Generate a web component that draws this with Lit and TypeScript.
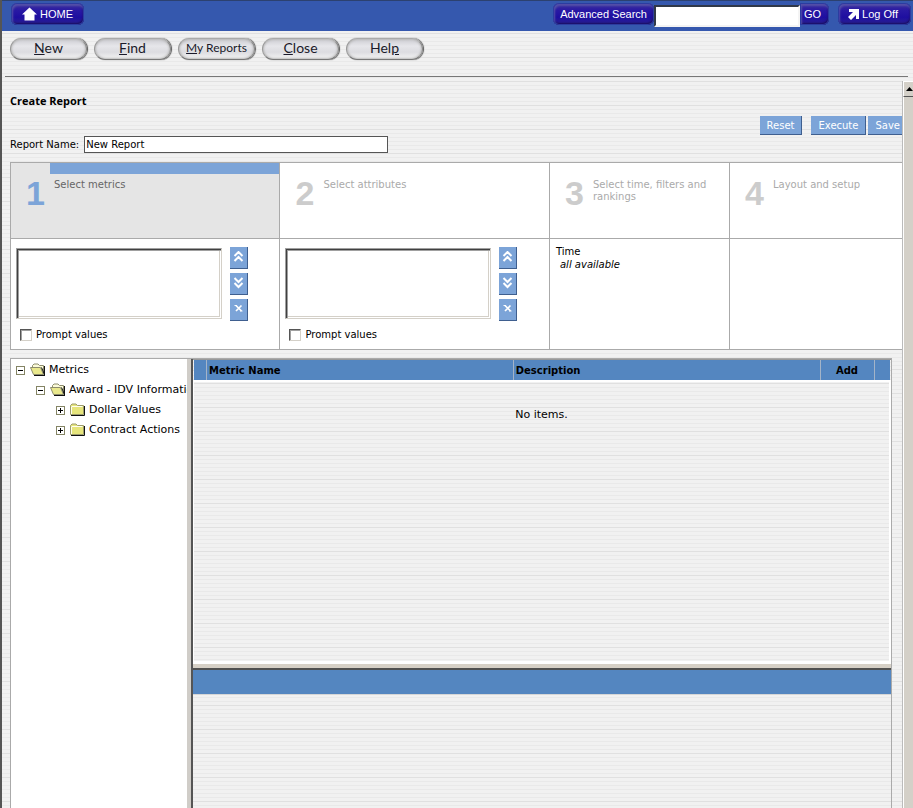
import { LitElement, html, css, svg } from "lit";
import { customElement, property } from "lit/decorators.js";

const chevronsUp = svg`<path d="M1.500 5 5.500 1 9.500 5M1.500 10 5.500 6 9.500 10" fill="none" stroke="#fff" stroke-width="2"/>`;
const chevronsDown = svg`<path d="M1.500 1 5.500 5 9.500 1M1.500 6 5.500 10 9.500 6" fill="none" stroke="#fff" stroke-width="2"/>`;
const cross = svg`<path d="M3 2.500 8.500 8M8.500 2.500 3 8" fill="none" stroke="#fff" stroke-width="1.700"/><path d="M1.500 2.500H4M7 8h2.500" stroke="#fff"/>`;

@customElement("step-picker")
class StepPicker extends LitElement {
  @property() name = "";

  static styles = css`
    :host { display: block; padding: 8px 6px 0 5px; }
    .row { display: flex; gap: 8px; }
    .list {
      flex: 0 1 206px; min-width: 0; height: 71px; box-sizing: border-box; margin: 1px 0 0; padding: 0;
      border: 1px solid; border-color: #a0a0a0 #d4d0c8 #d4d0c8 #a0a0a0; border-radius: 0;
      box-shadow: inset 1px 1px #404040, inset 2px 2px #a0a0a0, inset -1px -1px #fff, inset -2px -2px #d4d0c8;
      background: #fff; outline: none;
    }
    .tools { display: flex; flex-direction: column; gap: 4px; }
    .tool {
      width: 18px; height: 22px; padding: 0 0 2px; display: grid; place-items: center;
      background: #7ca4d8; border: 0; border-right: 1px solid #3f5f8f; border-bottom: 1px solid #3f5f8f;
    }
    .prompt { display: flex; align-items: center; gap: 4px; margin: 7px 0 0 4px; font: 10px/14px "DejaVu Sans", Verdana, sans-serif; }
    .box {
      appearance: none; width: 12px; height: 12px; margin: 0; background: #fff;
      border: 1px solid; border-color: #555 #d4d0c8 #d4d0c8 #555; box-shadow: inset 1px 1px #a0a0a0;
    }
  `;

  render() {
    return html`
      <div class="row">
        <select class="list" multiple aria-label="Selected ${this.name}"></select>
        <div class="tools">
          <button class="tool" aria-label="Move up"><svg width="11" height="12">${chevronsUp}</svg></button>
          <button class="tool" aria-label="Move down"><svg width="11" height="12">${chevronsDown}</svg></button>
          <button class="tool" aria-label="Remove"><svg width="11" height="11">${cross}</svg></button>
        </div>
      </div>
      <label class="prompt"><input class="box" type="checkbox" />Prompt values</label>
    `;
  }
}

const folderOpen = svg`
  <path d="M2.500 8V2.500L4 1h4l1.500 1.500h4v9" fill="#fbfad8" stroke="#8c8c6c"/>
  <path d="M3.500 11.500.5 4.500h10l3 7z" fill="#e9e88c" stroke="#8c8c6c"/>
  <path d="M4 12.500h11M14.500 3v9.500M11.500 4.500l3 7" fill="none" stroke="#111"/>`;
const folderClosed = svg`
  <path d="M.5 11.500v-9L2 1h4l1.500 1.500h6v9z" fill="#e6e57c" stroke="#9c9c6c"/>
  <path d="M1.500 3.500h11M1.500 4v7" fill="none" stroke="#fffff0"/>
  <path d="M1 12.500h13.500V3" fill="none" stroke="#111"/>`;

interface TreeNode { label: string; depth: number; open: boolean; }

const nodes: TreeNode[] = [
  { label: "Metrics", depth: 0, open: true },
  { label: "Award - IDV Information", depth: 1, open: true },
  { label: "Dollar Values", depth: 2, open: false },
  { label: "Contract Actions", depth: 2, open: false },
];

@customElement("metric-tree")
class MetricTree extends LitElement {
  static styles = css`
    :host { display: block; overflow: hidden; background: #fff; font: 11px/20px "DejaVu Sans", Verdana, sans-serif; }
    .tree { list-style: none; margin: 0; padding: 1px 0 0 5px; }
    .node { display: flex; align-items: center; height: 20px; white-space: nowrap; }
    .d1 { padding-left: 20px; }
    .d2 { padding-left: 40px; }
    .toggle { width: 9px; height: 9px; flex: none; padding: 0; margin-right: 5px; border: 0; background: none; display: block; }
    .toggle svg { display: block; }
    .icon { flex: none; margin-right: 3px; }
    .link { color: #000; text-decoration: none; }
  `;

  render() {
    return html`<ul class="tree">
      ${nodes.map((n) => html`
        <li class="node d${n.depth}">
          <button class="toggle" aria-label="${n.open ? "Collapse" : "Expand"} ${n.label}">
            <svg width="9" height="9" shape-rendering="crispEdges">
              <path d="M.5 .5h8v8h-8z" fill="#fff" stroke="#848464" />
              <path d=${n.open ? "M2 4.500h5" : "M2 4.500h5M4.500 2v5"} stroke="#000" />
            </svg>
          </button>
          <svg class="icon" width="16" height="14">${n.open ? folderOpen : folderClosed}</svg>
          <a class="link" href="#">${n.label}</a>
        </li>`)}
    </ul>`;
  }
}

const steps = ["Select metrics", "Select attributes", "Select time, filters and rankings", "Layout and setup"];

@customElement("app-root")
class AppRoot extends LitElement {
  static styles = css`
    :host {
      --stripes:
        repeating-linear-gradient(#0000 0 9px, #e0e0e0 9px 10px, #0000 10px 24px),
        repeating-linear-gradient(#f1f1f1 0 1px, #e9e9e9 1px 2px, #f1f1f1 2px 4px);
      display: flex; flex-direction: column; height: 100vh; box-sizing: border-box; overflow: hidden;
      border-left: 2px solid #555; color: #000; font: 10px/13px "DejaVu Sans", Verdana, sans-serif;
      background: var(--stripes);
    }
    .banner {
      display: flex; align-items: flex-start; flex: none; height: 31px; box-sizing: border-box; padding: 2px 2px 0 9px;
      background: #3558ae; border-top: 1px solid #2c4170;
    }
    .pill {
      display: flex; align-items: center; justify-content: center; height: 22px; padding: 0 7px; white-space: nowrap;
      border: 0; border-radius: 6px; color: #fff; font: 11px/22px "Liberation Sans", Arial, sans-serif; text-decoration: none;
      background: linear-gradient(#40349c, #2818a4 35%, #1e0ea0 65%, #2c2490);
      box-shadow: inset 0 0 0 1px #2c3ca0, inset 1px 2px 2px 1px #5450a8, inset -1px -2px 2px #180c60;
    }
    .home { gap: 3px; padding: 0 11px; }
    .search { display: flex; margin-left: auto; }
    .query {
      width: 146px; height: 22px; box-sizing: border-box; margin: 2px 0 0; padding: 0 3px; border: 2px solid;
      border-color: #303848 #f4f4f4 #f4f4f4 #303848; background: #fff; font: 12px "Liberation Sans", Arial, sans-serif;
    }
    .go { padding: 0 8px 0 4px; border-radius: 0 6px 6px 0; }
    .logoff { gap: 3px; padding: 0 13px 0 10px; margin-left: 9px; }
    .toolbar {
      display: flex; gap: 7px; flex: none; margin: 0 5px 0 3px; padding: 7px 5px 16px;
      border-bottom: 1px solid #777;
    }
    .key {
      width: 77px; height: 22px; padding: 0 0 2px; border: 1px solid; border-color: #aaa #888 #777 #999; border-radius: 11px;
      color: #1a1a2a; font: 14px/18px Lato, sans-serif;
      background: linear-gradient(#ccccd2, #e6e6ea 35%, #dcdce0 65%, #f4f4f4);
      box-shadow: inset 0 0 2px 1px #bbb, 1px 0 1px #555;
    }
    .small { font-size: 12px; }
    .body { flex: 1; min-height: 0; display: flex; padding-top: 4px; }
    .page { flex: 1; min-width: 0; display: flex; flex-direction: column; overflow: hidden; padding: 0 0 0 8px; }
    .title { margin: 13px 0 0; font: bold 11px/13px "Open Sans", Tahoma, sans-serif; }
    .actions { display: flex; justify-content: flex-end; margin: 9px -6px 0 0; }
    .act {
      height: 19px; padding: 0 7px; border: 0; border-right: 1px solid #3f5f8f; border-bottom: 1px solid #3f5f8f;
      background: #7ca4d8; color: #fff; font: 10px/19px "DejaVu Sans", Verdana, sans-serif;
    }
    .reset { margin-right: 9px; }
    .execute { margin-right: 2px; }
    .name { display: flex; align-items: center; gap: 5px; margin-top: 1px; }
    .field {
      flex: 0 1 304px; box-sizing: border-box; height: 17px; margin: 0; padding: 0 1px; border: 1px solid #555;
      background: #fff; color: #000; font: 10px "DejaVu Sans", Verdana, sans-serif;
    }
    .steps {
      display: grid; grid-template-columns: 270fr 270fr 180fr 173fr; grid-template-rows: 75px 110px; gap: 1px; flex: none;
      margin-top: 9px; padding: 1px 0 1px 1px; background: #aaa;
    }
    .step { display: flex; background: #fff; color: #aaa; }
    .num {
      flex: none; width: 39px; box-sizing: border-box; padding-left: 15px; margin-top: 10px;
      font: bold 34px/40px "Liberation Sans", Arial, sans-serif; color: #ccc;
    }
    .label { flex: 1; padding: 16px 4px 0; line-height: 12px; }
    .current { background: #e5e5e5; color: #666; }
    .current .num { color: #7ca4d8; }
    .current .label { border-top: 11px solid #7ca4d8; padding-top: 5px; }
    .cell { background: #fff; }
    .time { padding: 6px; }
    .value { font-style: italic; padding-left: 4px; }
    .work { flex: 1; min-height: 0; display: flex; margin: 8px 10px 0 0; border: 1px solid #aaa; border-bottom: 0; }
    .side { flex: 0 0 176px; }
    .split { flex: none; width: 4px; background: #d0cdc8; border-right: 2px solid #555; }
    .right { flex: 1; min-width: 0; display: flex; flex-direction: column; }
    .upper {
      flex: none; height: 301px; border: solid #fff; border-width: 1px 0 3px; border-top-color: #999;
      background: var(--stripes); background-position: 0 14px;
    }
    .grid { width: 100%; table-layout: fixed; border-collapse: collapse; }
    .grid th {
      height: 20px; padding: 1px 2px 0; box-sizing: border-box; text-align: left; background: #5486c0; font: bold 10px/19px "DejaVu Sans", Verdana, sans-serif;
      border-left: 1px solid #a4b4c8; border-bottom: 2px solid #fff;
    }
    .grid th:first-child { border-left: 0; }
    .grid .center { text-align: center; }
    .c0 { width: 13px; }
    .c3 { width: 54px; }
    .c4 { width: 16px; }
    .grid td { height: 64px; padding: 0; text-align: center; font-size: 11px; border: solid #fff; border-width: 0 2px 0 1px; }
    .grid .fill { height: 217px; }
    .bar { flex: none; height: 4px; background: #d6d0c6; border-bottom: 2px solid #505050; }
    .lower { flex: none; height: 24px; background: #5486c0; border-bottom: 1px solid #d6d6d6; }
    .scroll { flex: none; width: 11px; overflow: hidden; border-left: 1px solid #bbb; box-sizing: border-box; background: #d4d0c8; box-shadow: inset 1px 0 #fff; }
    .up {
      width: 16px; height: 16px; padding: 0 0 0 2px; border: 1px solid; border-color: #fff #555 #555 #fff;
      display: flex; align-items: center; background: #d4d0c8;
    }
  `;

  render() {
    return html`
      <header class="banner">
        <a class="pill home" href="#">
          <svg width="15" height="14"><path d="M7.500 .5 15 7.500h-2.500V13.500h-10V7.500H0z" fill="#fff" /></svg>HOME
        </a>
        <form class="search">
          <a class="pill" href="#">Advanced Search</a>
          <input class="query" type="text" aria-label="Search" />
          <button class="pill go" type="button">GO</button>
        </form>
        <a class="pill logoff" href="#">
          <svg width="11" height="11"><path d="M1 0h10v10H8V6L3 11 0 8l5-5H1z" fill="#fff" /></svg>Log Off
        </a>
      </header>
      <nav class="toolbar">
        <button class="key"><u>N</u>ew</button>
        <button class="key"><u>F</u>ind</button>
        <button class="key small"><u>M</u>y Reports</button>
        <button class="key"><u>C</u>lose</button>
        <button class="key">Hel<u>p</u></button>
      </nav>
      <div class="body">
        <main class="page">
          <h1 class="title">Create Report</h1>
          <div class="actions">
            <button class="act reset">Reset</button>
            <button class="act execute">Execute</button>
            <button class="act">Save</button>
          </div>
          <div class="name">
            <label for="report">Report Name:</label>
            <input class="field" id="report" type="text" .value=${"New Report"} />
          </div>
          <section class="steps">
            ${steps.map((s, i) => html`
              <div class="step ${i === 0 ? "current" : ""}">
                <div class="num">${i + 1}</div>
                <div class="label">${s}</div>
              </div>`)}
            <step-picker class="cell" name="metrics"></step-picker>
            <step-picker class="cell" name="attributes"></step-picker>
            <div class="cell time">
              <div>Time</div>
              <div class="value">all available</div>
            </div>
            <div class="cell"></div>
          </section>
          <section class="work">
            <metric-tree class="side"></metric-tree>
            <div class="split"></div>
            <div class="right">
              <div class="upper">
                <table class="grid">
                  <colgroup><col class="c0" /><col /><col /><col class="c3" /><col class="c4" /></colgroup>
                  <thead>
                    <tr><th></th><th>Metric Name</th><th>Description</th><th class="center">Add</th><th></th></tr>
                  </thead>
                  <tbody>
                    <tr><td colspan="5">No items.</td></tr>
                    <tr><td class="fill" colspan="5"></td></tr>
                  </tbody>
                </table>
              </div>
              <div class="bar"></div>
              <div class="lower"></div>
            </div>
          </section>
        </main>
        <div class="scroll">
          <button class="up" aria-label="Scroll up"><svg width="7" height="4"><path d="M3.500 0 7 4H0z" /></svg></button>
        </div>
      </div>
    `;
  }
}
